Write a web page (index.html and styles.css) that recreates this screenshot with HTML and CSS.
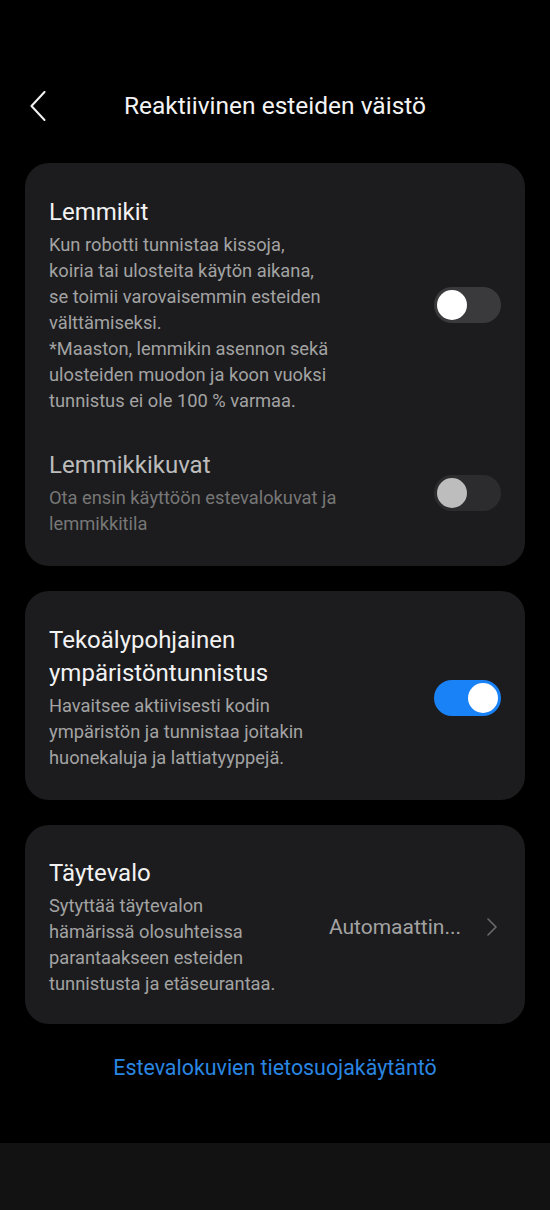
FILE: index.html
```html
<!DOCTYPE html>
<html lang="fi">
<head>
<meta charset="utf-8">
<title>Reaktiivinen esteiden väistö</title>
<link rel="stylesheet" href="styles.css">
</head>
<body>
<div class="page">
  <header class="header">
    <div class="back">
      <svg width="16" height="30" viewBox="0 0 16 30"><path d="M14.5 1 L1.5 15 L14.5 29" fill="none" stroke="#f2f2f2" stroke-width="2" stroke-linecap="round" stroke-linejoin="round"/></svg>
    </div>
    <h1 class="title">Reaktiivinen esteiden väistö</h1>
    <div></div>
  </header>

  <main class="cards">
    <section class="card">
      <div class="row">
        <div class="text">
          <div class="item-title">Lemmikit</div>
          <div class="item-desc">Kun robotti tunnistaa kissoja,<br>koiria tai ulosteita käytön aikana,<br>se toimii varovaisemmin esteiden<br>välttämiseksi.<br>*Maaston, lemmikin asennon sekä<br>ulosteiden muodon ja koon vuoksi<br>tunnistus ei ole 100 % varmaa.</div>
        </div>
        <div class="toggle"><span class="knob"></span></div>
      </div>
      <div class="row row-next disabled">
        <div class="text">
          <div class="item-title">Lemmikkikuvat</div>
          <div class="item-desc">Ota ensin käyttöön estevalokuvat ja<br>lemmikkitila</div>
        </div>
        <div class="toggle toggle-disabled"><span class="knob"></span></div>
      </div>
    </section>

    <section class="card">
      <div class="row">
        <div class="text">
          <div class="item-title">Tekoälypohjainen<br>ympäristöntunnistus</div>
          <div class="item-desc">Havaitsee aktiivisesti kodin<br>ympäristön ja tunnistaa joitakin<br>huonekaluja ja lattiatyyppejä.</div>
        </div>
        <div class="toggle toggle-on"><span class="knob"></span></div>
      </div>
    </section>

    <section class="card card-last">
      <div class="row">
        <div class="text">
          <div class="item-title">Täytevalo</div>
          <div class="item-desc">Sytyttää täytevalon<br>hämärissä olosuhteissa<br>parantaakseen esteiden<br>tunnistusta ja etäseurantaa.</div>
        </div>
        <div class="value">
          <span class="value-text">Automaattin...</span>
          <svg class="chev" width="10" height="18" viewBox="0 0 10 18"><path d="M1 1 L9 9 L1 17" fill="none" stroke="#6b6b6b" stroke-width="1.6" stroke-linecap="round" stroke-linejoin="round"/></svg>
        </div>
      </div>
    </section>
  </main>

  <a class="link" href="#">Estevalokuvien tietosuojakäytäntö</a>

  <div class="bottom-bar"></div>
</div>
</body>
</html>
```

FILE: styles.css
```css
html, body {
  margin: 0;
  padding: 0;
  background: #000;
}

body {
  font-family: Roboto, "Noto Sans", "Liberation Sans", sans-serif;
  color: #f2f2f2;
}

.page {
  width: 550px;
  height: 1210px;
  display: flex;
  flex-direction: column;
  overflow: hidden;
}

.header {
  display: grid;
  grid-template-columns: 1fr auto 1fr;
  align-items: center;
  margin-top: 89px;
  height: 33px;
}

.back {
  padding-left: 30px;
  display: flex;
  align-items: center;
}

.title {
  margin: 0;
  font-size: 24.5px;
  font-weight: 400;
  line-height: 33px;
  color: #f4f4f4;
}

.cards {
  display: flex;
  flex-direction: column;
  gap: 25px;
  padding: 0 25px;
  margin-top: 41px;
}

.card {
  background: #1c1c1e;
  border-radius: 24px;
  padding: 33px 24px 29px 24px;
}

.card-last {
  padding-top: 32px;
  padding-bottom: 27px;
}

.row {
  display: flex;
  align-items: center;
  justify-content: space-between;
}

.row-next {
  margin-top: 35px;
}

.text {
  flex: 1;
  min-width: 0;
}

.item-title {
  font-size: 24px;
  line-height: 33px;
  color: #f2f2f2;
}

.item-desc {
  margin-top: 3px;
  font-size: 18.3px;
  line-height: 26px;
  color: #a3a3a3;
}

.disabled .item-title {
  color: #bcbcbc;
}

.disabled .item-desc {
  color: #777;
}

.toggle {
  flex: none;
  width: 67px;
  height: 36px;
  border-radius: 18px;
  background: #3a3a3c;
  display: flex;
  align-items: center;
  padding: 0 3px;
  box-sizing: border-box;
}

.knob {
  width: 30px;
  height: 30px;
  border-radius: 50%;
  background: #fff;
}

.toggle-disabled {
  background: #2c2c2e;
}

.toggle-disabled .knob {
  background: #bdbdbd;
}

.toggle-on {
  background: #1a82f7;
  justify-content: flex-end;
}

.value {
  display: flex;
  align-items: center;
  gap: 26px;
  padding-right: 4px;
}

.value-text {
  font-size: 21px;
  color: #a3a3a3;
}

.chev {
  display: block;
}

.link {
  display: block;
  text-align: center;
  margin-top: 30px;
  font-size: 21.4px;
  line-height: 28px;
  color: #2a86e2;
  text-decoration: none;
}

.bottom-bar {
  margin-top: auto;
  height: 67px;
  background: #121212;
}
```
